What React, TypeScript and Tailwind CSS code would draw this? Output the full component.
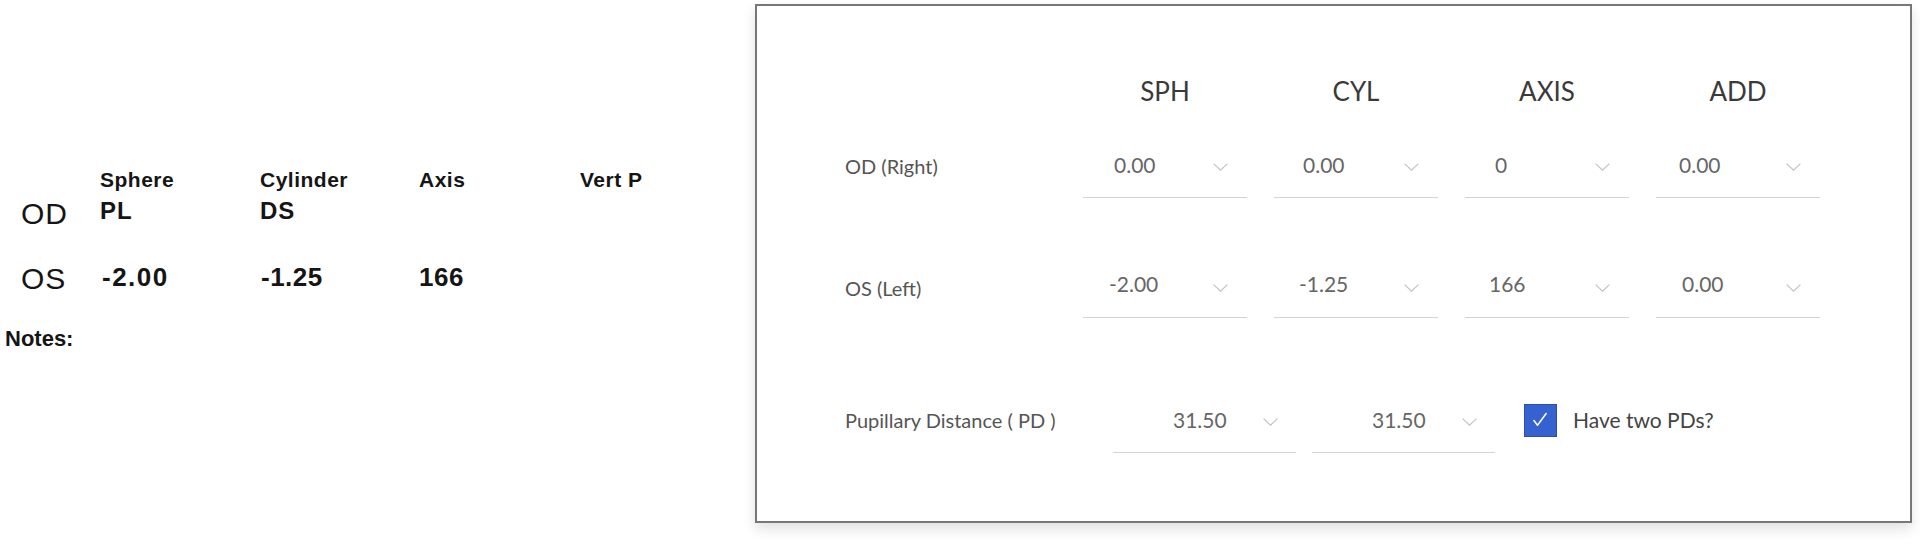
import React from 'react';

// Thin grey chevron used in every select
const Chevron = () => (
  <svg width="15" height="8" viewBox="0 0 15 8" fill="none" stroke="#c2c2c2" strokeWidth="1.2">
    <path d="M0.6 0.6 L7.5 7.2 L14.4 0.6" />
  </svg>
);

interface SelectProps {
  value: string;
  valueClass: string;
  chevronClass: string;
}

const Select: React.FC<SelectProps> = ({ value, valueClass, chevronClass }) => (
  <div className="flex items-start h-[50px] border-b border-[#d2d2d2]">
    <span className={`text-[21px] leading-[25px] text-[#666] ${valueClass}`}>{value}</span>
    <span className={`ml-auto mr-[19px] ${chevronClass}`}>
      <Chevron />
    </span>
  </div>
);

const odRow = [
  { value: '0.00', valueClass: 'pl-[31px] pt-[4px]' },
  { value: '0.00', valueClass: 'pl-[29px] pt-[4px]' },
  { value: '0', valueClass: 'pl-[30px] pt-[4px]' },
  { value: '0.00', valueClass: 'pl-[23px] pt-[4px]' },
];

const osRow = [
  { value: '-2.00', valueClass: 'pl-[26px] pt-[3px]' },
  { value: '-1.25', valueClass: 'pl-[25px] pt-[3px]' },
  { value: '166', valueClass: 'pl-[24px] pt-[3px]' },
  { value: '0.00', valueClass: 'pl-[26px] pt-[3px]' },
];

const PdSelect = ({ value }: { value: string }) => (
  <div className="flex items-start w-[183px] h-[48px] border-b border-[#d2d2d2]">
    <span className="pl-[60px] pt-[2px] text-[21px] leading-[25px] text-[#666]">{value}</span>
    <span className="ml-auto mr-[18px] mt-[13px]">
      <Chevron />
    </span>
  </div>
);

export default function App() {
  return (
    <div className="flex w-[1920px] h-[547px] bg-white overflow-hidden">
      {/* Scanned prescription */}
      <div className="w-[755px] shrink-0 pt-[168px] text-[#151515] font-['Liberation_Sans',Arial,sans-serif]">
        <div className="grid grid-cols-[100px_160px_159px_161px_1fr] text-[21px] font-bold leading-[24px] tracking-[0.5px]">
          <span />
          <span>Sphere</span>
          <span>Cylinder</span>
          <span>Axis</span>
          <span>Vert P</span>
        </div>
        <div className="mt-[6px] grid grid-cols-[100px_160px_159px_161px_1fr] items-start">
          <span className="pl-[21px] text-[30px] leading-[32px] tracking-[1px]">OD</span>
          <span className="mt-[1px] text-[24px] font-bold leading-[24px] tracking-[1px]">PL</span>
          <span className="mt-[1px] text-[24px] font-bold leading-[24px] tracking-[1px]">DS</span>
        </div>
        <div className="mt-[33px] grid grid-cols-[100px_160px_159px_161px_1fr] items-start">
          <span className="pl-[21px] text-[30px] leading-[32px] tracking-[1px]">OS</span>
          <span className="mt-[1px] pl-[2px] text-[26px] font-bold leading-[26px] tracking-[1.5px]">-2.00</span>
          <span className="mt-[1px] pl-[1px] text-[26px] font-bold leading-[26px] tracking-[0.5px]">-1.25</span>
          <span className="mt-[1px] text-[26px] font-bold leading-[26px] tracking-[0.5px]">166</span>
        </div>
        <div className="mt-[32px] pl-[5px] text-[22px] font-bold leading-[24px]">Notes:</div>
      </div>

      {/* Prescription form */}
      <div className="mt-[4px] w-[1157px] h-[519px] shrink-0 border-2 border-[#777] bg-white shadow-[0_6px_12px_rgba(0,0,0,0.12)] pl-[88px] pt-[70px] font-[Lato,sans-serif]">
        <div className="grid grid-cols-[211px_164px_164px_164px_164px] gap-x-[27px] text-[26px] leading-[30px] text-[#3a3a3a] text-center">
          <span />
          <span>SPH</span>
          <span>CYL</span>
          <span>AXIS</span>
          <span>ADD</span>
        </div>

        <div className="mt-[42px] grid grid-cols-[211px_164px_164px_164px_164px] gap-x-[27px] items-start">
          <span className="pt-[6px] text-[20px] leading-[24px] text-[#555]">OD (Right)</span>
          {odRow.map((c, i) => (
            <Select key={i} value={c.value} valueClass={c.valueClass} chevronClass="mt-[15px]" />
          ))}
        </div>

        <div className="mt-[70px] grid grid-cols-[211px_164px_164px_164px_164px] gap-x-[27px] items-start">
          <span className="pt-[8px] text-[20px] leading-[24px] text-[#555]">OS (Left)</span>
          {osRow.map((c, i) => (
            <Select key={i} value={c.value} valueClass={c.valueClass} chevronClass="mt-[16px]" />
          ))}
        </div>

        <div className="mt-[87px] flex items-start">
          <span className="w-[268px] pt-[3px] text-[20px] leading-[24px] text-[#555]">Pupillary Distance ( PD )</span>
          <PdSelect value="31.50" />
          <div className="ml-[16px]">
            <PdSelect value="31.50" />
          </div>
          <div className="ml-[29px] -mt-[1px] w-[33px] h-[33px] bg-[#3562d0] border border-[#2c4fa8] flex items-center justify-center">
            <svg width="33" height="33" viewBox="0 0 33 33" fill="none" stroke="#fff" strokeWidth="1.6" strokeLinecap="round" strokeLinejoin="round">
              <path d="M9.5 16.5 L13.3 21.5 L22.5 9" />
            </svg>
          </div>
          <span className="ml-[16px] mt-[2px] text-[21px] leading-[25px] text-[#444]">Have two PDs?</span>
        </div>
      </div>
    </div>
  );
}
